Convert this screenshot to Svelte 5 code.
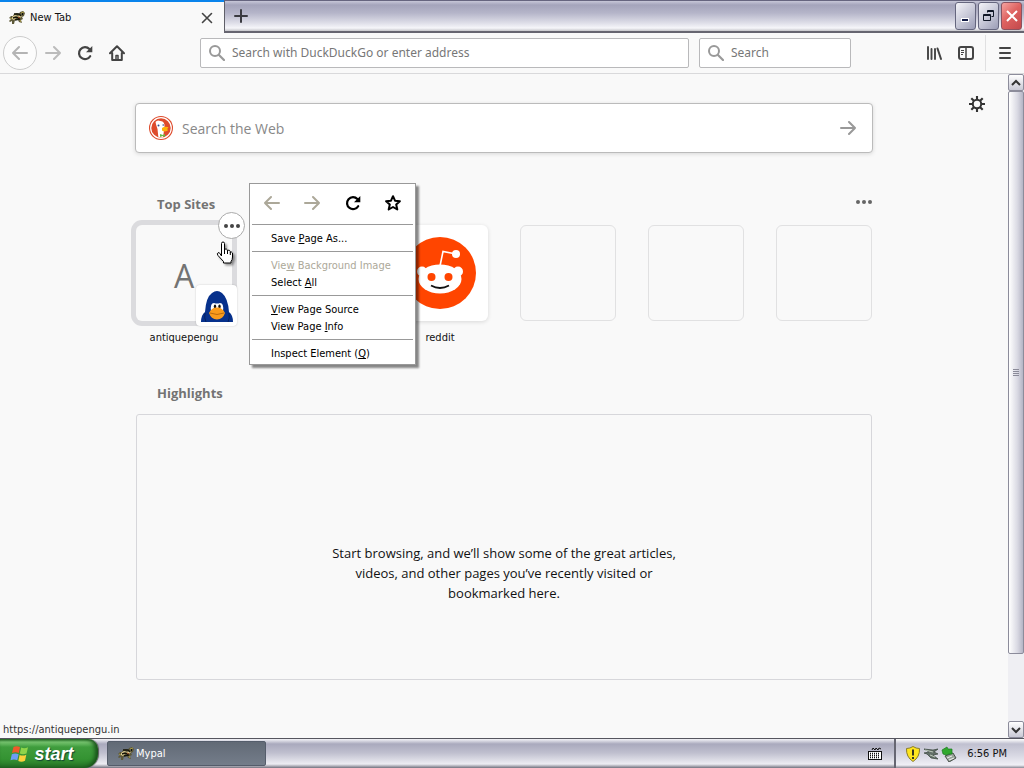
<script>
  const emptySites = [1, 2, 3];
</script>

{#snippet turtle()}
  <svg class="turtle" width="16" height="16" viewBox="0 0 16 16" aria-hidden="true">
    <path d="M0 8L2 6 4 6 5 4 8 3 10 4 11 2 14 1 16 3 15 6 13 7 14 9 12 10 13 13 10 12 9 10 6 10 5 14 3 14 3 11 1 12 0 11 2 9Z" fill="#5d5838" />
    <path d="M3 7l3-2 3 1 2-1 2 1-2 2-4 0-2 2-2-1z" fill="#e2d196" />
    <path d="M5 4h5l2 2M4 8l3-1 4 1M6 10l5-1" stroke="#151509" stroke-width="1.500" fill="none" />
    <path d="M12 3l3-1M1 8l2 1M11 10l1 2" stroke="#a79a48" />
    <path d="M13 4h1" stroke="#111" stroke-width="2" />
    <path d="M9 7l2 1" stroke="#b4572c" />
  </svg>
{/snippet}
{#snippet back()}
  <svg width="16" height="16" viewBox="0 0 16 16" fill="none" stroke="currentColor" stroke-width="2" stroke-linecap="round" stroke-linejoin="round" aria-hidden="true"><path d="M15 8H1M7 2L1 8l6 6" /></svg>
{/snippet}
{#snippet forward()}
  <svg width="16" height="16" viewBox="0 0 16 16" fill="none" stroke="currentColor" stroke-width="2" stroke-linecap="round" stroke-linejoin="round" aria-hidden="true"><path d="M1 8h14M9 2l6 6-6 6" /></svg>
{/snippet}
{#snippet reload()}
  <svg width="16" height="16" viewBox="0 0 16 16" fill="none" stroke="currentColor" stroke-width="2.2" stroke-linecap="round" aria-hidden="true"><path d="M13.2 11.2A6 6 0 1 1 12.4 4" /><path d="M15.3 1v6.3H9z" fill="currentColor" stroke="none" /></svg>
{/snippet}
{#snippet lens()}
  <svg width="16" height="16" viewBox="0 0 16 16" fill="none" stroke="currentColor" stroke-width="2" stroke-linecap="round" aria-hidden="true"><circle cx="6" cy="6" r="5" /><path d="M10 10l5 5" stroke-width="2.2" /></svg>
{/snippet}
{#snippet dots()}
  <svg width="16" height="16" viewBox="0 0 16 16" fill="currentColor" aria-hidden="true"><circle cx="2" cy="8" r="2" /><circle cx="8" cy="8" r="2" /><circle cx="14" cy="8" r="2" /></svg>
{/snippet}

<div class="desktop">
  <header class="titlebar">
    <div class="tab">
      {@render turtle()}
      <span>New Tab</span>
      <button aria-label="Close tab"><svg width="12" height="12" viewBox="0 0 12 12" fill="none" stroke="#444" stroke-width="1.600" stroke-linecap="round"><path d="M1.500 1.500l9 9M10.500 1.500l-9 9" /></svg></button>
    </div>
    <button class="newtab" aria-label="Open a new tab"><svg width="16" height="16" viewBox="0 0 16 16" stroke="#3a3a40" stroke-width="2" stroke-linecap="round"><path d="M8 2v12M2 8h12" /></svg></button>
    <div class="winbuttons">
      <button aria-label="Minimize"><svg width="16" height="16" viewBox="0 0 16 16"><path d="M3 10h8v4H3z" fill="#fff" /><path d="M4 11h6v2H4z" fill="#111a44" /></svg></button>
      <button aria-label="Restore"><svg width="16" height="16" viewBox="0 0 16 16" fill="none" stroke="#111827"><path d="M2.500 6.500h7v6h-7zM2 7.500h8M6.500 4.500v-2h6v6h-2M6 3.500h7" /></svg></button>
      <button class="close" aria-label="Close"><svg width="16" height="16" viewBox="0 0 16 16" fill="none" stroke="#fff" stroke-width="2"><path d="M3 3l10 10M13 3L3 13" /></svg></button>
    </div>
  </header>

  <nav class="toolbar">
    <div class="navbuttons">
      <button class="back" aria-label="Back" disabled>{@render back()}</button>
      <button class="dim" aria-label="Forward" disabled>{@render forward()}</button>
      <button aria-label="Reload">{@render reload()}</button>
      <button aria-label="Home"><svg width="16" height="16" viewBox="0 0 16 16" fill="none" stroke="currentColor" stroke-width="2" stroke-linecap="round" stroke-linejoin="round"><path d="M1 8.300L8 1.300l7 7M3.200 8v7h9.600V8" /><path d="M7 15v-4.500h2V15" stroke-width="1.500" /></svg></button>
    </div>
    <label class="field address">{@render lens()}<input aria-label="Address" placeholder="Search with DuckDuckGo or enter address" /></label>
    <label class="field search">{@render lens()}<input aria-label="Search" placeholder="Search" /></label>
    <div class="tools">
      <button aria-label="Library"><svg width="16" height="16" viewBox="0 0 16 16" fill="none" stroke="currentColor" stroke-width="2" stroke-linecap="round"><path d="M2 2v12M5.500 4v10M9 4v10" stroke-width="1.900" /><path d="M11.500 3.500L15 14" /></svg></button>
      <button aria-label="Sidebars"><svg width="16" height="16" viewBox="0 0 16 16" fill="none" stroke="currentColor" stroke-width="2"><rect x="1" y="2" width="14" height="12" rx="2" /><path d="M8 2v12" stroke-width="1.500" /><path d="M3 5.500h3M3 7.500h3M3 9.500h2" stroke-width="1" /></svg></button>
      <span class="divider"></span>
      <button aria-label="Menu"><svg width="16" height="16" viewBox="0 0 16 16" stroke="currentColor" stroke-width="2" stroke-linecap="round"><path d="M3 3h10M3 8h10M3 13h10" /></svg></button>
    </div>
  </nav>

  <div class="viewport">
    <main>
      <button class="gear" aria-label="Customize"><svg width="16" height="16" viewBox="0 0 16 16" fill="none" stroke="currentColor"><circle cx="8" cy="8" r="4.200" stroke-width="2" /><path d="M8 0v4M8 12v4M0 8h4M12 8h4M2.300 2.300l2.800 2.800M10.900 10.900l2.800 2.800M2.300 13.700l2.800-2.800M10.900 5.100l2.800-2.800" stroke-width="2.100" /></svg></button>
      <div class="content">
        <label class="websearch">
          <svg width="24" height="24" viewBox="0 0 24 24" aria-hidden="true">
            <circle cx="12" cy="12" r="12" fill="#de4b2c" /><circle cx="12" cy="12" r="10.300" fill="none" stroke="#fff" stroke-width="1.200" />
            <path d="M6.500 6Q8 3.500 11.500 5Q16 5.500 15.500 11L14.500 18 14 21.300Q11 22 9.300 20.800L8.500 13Q7 9 6.500 6Z" fill="#fff" />
            <path d="M13 12Q16 10 19.500 11.300L18 13.200Q20 13.500 18 15Q15 16 13 14.500Z" fill="#fdb20a" />
            <circle cx="9.500" cy="9.500" r="1" fill="#2d4f8e" /><circle cx="14.200" cy="9" r=".8" fill="#2d4f8e" />
            <path d="M11 18l3 1 2-1v3l-2-1-3 1z" fill="#65bc46" />
          </svg>
          <input aria-label="Search the Web" placeholder="Search the Web" />
          <button aria-label="Submit search">{@render forward()}</button>
        </label>

        <section class="sites">
          <div class="heading"><h2>Top Sites</h2><button aria-label="Top Sites options">{@render dots()}</button></div>
          <div class="tiles">
            <a class="site" href="https://antiquepengu.in">
              <span class="tile letter">A
                <span class="favicon"><svg width="34" height="34" viewBox="0 0 34 34" aria-hidden="true"><path d="M1 33Q1 26 5 23Q6 8 12 4Q17 0 22 4Q28 9 29 23Q33 26 33 33Z" fill="#07318c" /><path d="M5 24Q4 29 6 33M29 24Q30 29 28 33" stroke="#05205e" fill="none" /><path d="M11 22Q10 14 14 14Q17 15 20 14Q24 14 23 22Z" fill="#fff" /><ellipse cx="15" cy="17.500" rx="1.200" ry="2" fill="#111" /><ellipse cx="19.500" cy="17.500" rx="1.200" ry="2" fill="#111" /><path d="M9 24Q12 18 17 18.500Q22 18 25 24Q23 30 17 30.500Q11 30 9 24Z" fill="#f99b1c" /><path d="M10 24Q17 27 24 24" stroke="#bd6b0c" fill="none" /></svg></span>
              </span>
              <span class="name">antiquepengu</span>
            </a>
            <span class="site"><span class="tile blank"></span></span>
            <a class="site" href="#reddit">
              <span class="tile white"><svg width="72" height="72" viewBox="0 0 72 72" aria-hidden="true"><circle cx="36" cy="36" r="36" fill="#ff4500" /><path d="M36 29l3-14.500 13 2.500" fill="none" stroke="#fff" stroke-width="1.600" /><circle cx="52" cy="17" r="4" fill="#fff" /><circle cx="18" cy="34.500" r="5" fill="#fff" /><circle cx="54" cy="34.500" r="5" fill="#fff" /><ellipse cx="36" cy="42" rx="21.500" ry="14.500" fill="#fff" /><circle cx="27.500" cy="40" r="4" fill="#ff4500" /><circle cx="44.500" cy="40" r="4" fill="#ff4500" /><path d="M27 48.500q9 5 18 0" fill="none" stroke="#111" stroke-width="1.800" /></svg></span>
              <span class="name">reddit</span>
            </a>
            {#each emptySites as n (n)}<span class="site"><span class="tile blank"></span></span>{/each}
          </div>
          <button class="sitemenu" aria-label="Site options">{@render dots()}</button>
          <svg class="cursor" width="18" height="24" viewBox="0 0 18 24" aria-hidden="true"><path d="M5.500 15V2.500Q5.500 1 7 1T8.500 2.500V9Q9 7.500 10.300 8T11.500 10Q12 8.700 13.300 9.300T14.300 11.500Q15.500 10.300 16.500 12V16Q16.500 19 15 20.500V22H7.500V20.500L2 14.500Q.5 12.500 2 11.800T4 12.800Z" fill="#fff" stroke="#000" /><path d="M8.500 9v4M11.500 10v3M14.300 11v3" stroke="#000" /></svg>

          <div class="menu" role="menu">
            <div class="iconrow">
              <button role="menuitem" aria-label="Back" disabled>{@render back()}</button>
              <button role="menuitem" aria-label="Forward" disabled>{@render forward()}</button>
              <button role="menuitem" aria-label="Reload">{@render reload()}</button>
              <button role="menuitem" aria-label="Bookmark"><svg width="16" height="16" viewBox="0 0 16 16" fill="none" stroke="currentColor" stroke-width="2" stroke-linejoin="round"><path d="M8 1.200l2 4.500 4.900.5-3.700 3.300 1.100 5L8 12l-4.300 2.500 1.100-5L1.100 6.200l4.900-.5z" /></svg></button>
            </div>
            <div class="group"><button role="menuitem">Save <u>P</u>age As...</button></div>
            <div class="group"><button role="menuitem" disabled>Vie<u>w</u> Background Image</button><button role="menuitem">Select <u>A</u>ll</button></div>
            <div class="group"><button role="menuitem"><u>V</u>iew Page Source</button><button role="menuitem">View Page <u>I</u>nfo</button></div>
            <div class="group"><button role="menuitem">Inspect Element (<u>Q</u>)</button></div>
          </div>
        </section>

        <section class="highlights">
          <h2>Highlights</h2>
          <div class="emptybox"><p>Start browsing, and we’ll show some of the great articles, videos, and other pages you’ve recently visited or bookmarked here.</p></div>
        </section>
      </div>
      <div class="status">https://antiquepengu.in</div>
    </main>
    <div class="scrollbar">
      <button aria-label="Scroll up"><svg width="10" height="8" viewBox="0 0 10 8" fill="none" stroke="#333" stroke-width="2"><path d="M1 6l4-4 4 4" /></svg></button>
      <div class="track"><div class="thumb"><svg width="6" height="8" viewBox="0 0 6 8" stroke="#8b8b99"><path d="M0 .5h6M0 2.500h6M0 4.500h6M0 6.500h6" /></svg></div></div>
      <button aria-label="Scroll down"><svg width="10" height="8" viewBox="0 0 10 8" fill="none" stroke="#333" stroke-width="2"><path d="M1 2l4 4 4-4" /></svg></button>
    </div>
  </div>

  <footer class="taskbar">
    <button class="start"><svg width="20" height="18" viewBox="0 0 20 18" aria-hidden="true"><path d="M3.500 2Q6.500.3 10 2L8.800 8Q5.500 6.500 2 8Z" fill="#f0592b" /><path d="M11.200 2.600Q14.500 4 18 2.300L16.500 8.500Q13 10 9.800 8.600Z" fill="#8fd44a" /><path d="M1.800 9.200Q5.200 7.700 8.600 9.200L7.300 15.300Q4 13.700.5 15.300Z" fill="#6d9df5" /><path d="M9.600 9.900Q13 11.300 16.300 9.700L15 15.800Q11.500 17.500 8.300 16Z" fill="#fcd03b" /></svg><span>start</span></button>
    <button class="task">{@render turtle()}<span>Mypal</span></button>
    <svg class="keyboard" width="14" height="14" viewBox="0 0 14 14" fill="none" stroke="#111" aria-hidden="true"><rect x=".5" y="5.500" width="13" height="8" fill="#fff" /><path d="M2 7.500h10M2 9.500h10M2 11.500h10" stroke-dasharray="1 1" stroke-width="1.500" /><path d="M4 4l1-2 2 2 1-2 2 2 1-2 2 1" /></svg>
    <div class="tray">
      <svg width="16" height="16" viewBox="0 0 16 16" aria-hidden="true"><path d="M8 .5Q11 2.500 14.500 2.500Q15 11 8 15.500Q1 11 1.500 2.500Q5 2.500 8 .5Z" fill="#ffe51e" stroke="#8a7d2b" /><path d="M8 3.500v6M8 11v2" stroke="#222" stroke-width="1.800" /></svg>
      <svg width="16" height="16" viewBox="0 0 16 16" aria-hidden="true"><path d="M1 3l9 1 5-1-4 3 4 2-5 1 5 4-7-1-4-4-3-1 5-1z" fill="#637069" stroke="#35423a" stroke-width=".7" /><path d="M2 4l8 2M7 9l5 2" stroke="#bdcabb" /></svg>
      <svg width="16" height="16" viewBox="0 0 16 16" aria-hidden="true"><path d="M4 10l8-3 3 5-7 4z" fill="#9aa49a" stroke="#485048" /><path d="M6 12l5-2M8 14l5-2" stroke="#eee" /><path d="M1 4l5-3 1 2h4v5H8L5 9 2 8z" fill="#30a82d" stroke="#187b20" stroke-width=".7" /></svg>
      <time>6:56 PM</time>
    </div>
  </footer>
</div>

<style>
  :global(body) { margin: 0; }
  * { box-sizing: border-box; }
  .desktop { display: flex; flex-direction: column; min-height: 100vh; background: #f9f9f9; color: #111; font: 11px/17px "DejaVu Sans Condensed", "DejaVu Sans", sans-serif; font-stretch: condensed; }
  button { font: inherit; color: inherit; background: none; border: 0; padding: 0; display: flex; align-items: center; justify-content: center; }
  input { font: inherit; color: #222; border: 0; background: none; padding: 0; flex: 1; min-width: 0; outline: 0; }
  input::placeholder { color: #777; opacity: 1; }
  a { color: inherit; text-decoration: none; }
  svg { flex: none; display: block; }

  .titlebar { display: flex; height: 33px; border-top: 1px solid #66657f; border-bottom: 2px solid #666570; background: linear-gradient(#c7c7d8 0, #a4a4bb 4px, #b5b5c9 12px, #dedee8 22px, #f6f6fa 27px, #c5c5ca 30px); }
  .tab { display: flex; align-items: center; gap: 5px; width: 224px; height: 33px; margin-top: -1px; padding: 0 11px 0 9px; border-top: 2px solid #0a84ec; background: #f9f9f9; }
  .tab span { flex: 1; }
  .newtab { width: 33px; border-left: 1px solid #5f5f68; }
  .winbuttons { display: flex; gap: 2px; margin-left: auto; padding: 1px 2px 0 0; }
  .winbuttons button { width: 21px; height: 28px; border: 1px solid #65667e; border-radius: 3px; background: linear-gradient(135deg, #f3f3f8, #c9cad9 50%, #9b9db6); }
  .winbuttons .close { background: linear-gradient(135deg, #f5a3a0, #df6361 45%, #c3494c); border-color: #8b5360; }

  .toolbar { display: flex; align-items: center; height: 41px; border-bottom: 1px solid #d9d9db; color: #444; padding-right: 3px; }
  .navbuttons { display: flex; align-items: center; width: 200px; padding-left: 3px; }
  .navbuttons button { width: 32px; height: 32px; }
  .navbuttons .back { width: 34px; height: 34px; border: 1px solid #ccc; border-radius: 50%; background: #fcfcfc; color: #b4b4b4; }
  .navbuttons .dim { color: #bbb; }
  .field { display: flex; align-items: center; gap: 7px; height: 30px; padding: 0 8px; border: 1px solid #b9b9bb; border-radius: 2px; background: #fff; color: #999; font: 12px/18px "Noto Sans", sans-serif; }
  .address { flex: 1; }
  .search { width: 152px; margin-left: 10px; }
  .tools { display: flex; align-items: center; margin-left: 67px; }
  .tools button { width: 32px; height: 32px; }
  .divider { width: 1px; height: 36px; margin: 0 3px; background: #e0e0e1; }

  .viewport { display: flex; flex: 1; }
  main { position: relative; flex: 1; padding: 29px 24px 58px; }
  .gear { position: absolute; top: 22px; right: 23px; color: #333; }
  .content { max-width: 736px; margin: 0 auto; font-family: "Open Sans", sans-serif; font-stretch: normal; }
  .websearch { display: flex; align-items: center; gap: 9px; height: 50px; margin: 0 -1px; padding: 0 16px 0 13px; border: 1px solid #bbb; border-radius: 4px; background: #fff; box-shadow: 0 1px 4px #0002; font-size: 14px; color: #999; }
  .websearch input::placeholder { color: #888; }
  h2 { margin: 0; font-size: 13px; line-height: 20px; font-weight: 700; color: #737373; }
  .sites { position: relative; margin-top: 41px; }
  .heading { display: flex; align-items: flex-start; justify-content: space-between; padding-left: 21px; }
  .heading button { color: #666; }
  .tiles { display: grid; grid-template-columns: repeat(6, 96px); justify-content: space-between; margin-top: 11px; }
  .site { display: flex; flex-direction: column; align-items: center; }
  .tile { position: relative; display: flex; align-items: center; justify-content: center; width: 96px; height: 96px; border-radius: 6px; }
  .letter { padding-top: 4px; color: #737373; font-size: 32px; box-shadow: 0 0 0 5px #dbdbde; background: #f9f9f9; }
  .white { background: #fff; box-shadow: 0 1px 4px #0002; }
  .blank { border: 1px solid #e1e1e2; }
  .favicon { position: absolute; right: -5px; bottom: -5px; width: 41px; height: 41px; display: flex; align-items: flex-end; justify-content: center; padding-bottom: 3px; border-radius: 4px; background: #fff; box-shadow: 0 0 2px #0003; }
  .name { margin-top: 8px; font: 11px/17px "DejaVu Sans Condensed", sans-serif; font-stretch: condensed; }
  .sitemenu { position: absolute; left: 82px; top: 18px; width: 27px; height: 27px; border: 1px solid #aaa; border-radius: 50%; background: #fff; color: #444; }
  .cursor { position: absolute; left: 80px; top: 47px; filter: drop-shadow(2px 2px 1px #0006); }

  .menu { position: absolute; left: 113px; top: -11px; width: 167px; padding: 1px 2px 0; border: 1px solid #999; background: #fff; box-shadow: 3px 3px 2px #0007; font: 11px/17px "DejaVu Sans Condensed", sans-serif; font-stretch: condensed; color: #000; }
  .iconrow { display: flex; height: 39px; padding-bottom: 4px; }
  .iconrow button { flex: 1; }
  .menu button:disabled { color: #aca899; }
  .group { border-top: 1px solid #999; padding: 5px 0 4px; }
  .group:last-child { padding-bottom: 2px; }
  .group button { width: 100%; justify-content: flex-start; padding-left: 19px; white-space: pre; }

  .highlights { margin-top: 37px; }
  .highlights h2 { padding-left: 21px; }
  .emptybox { display: flex; align-items: center; justify-content: center; height: 266px; margin-top: 11px; padding-top: 52px; border: 1px solid #d7d7db; border-radius: 3px; }
  .emptybox p { width: 350px; margin: 0; text-align: center; font-size: 13px; line-height: 20px; }
  .status { position: absolute; left: 0; bottom: 0; padding: 0 3px; color: #333; }

  .scrollbar { display: flex; flex-direction: column; width: 16px; background: #efeff3; }
  .scrollbar button { height: 17px; border: 1px solid #8c8c9b; border-radius: 2px; background: linear-gradient(#fff, #c9c9d5); }
  .track { flex: 1; display: flex; }
  .thumb { width: 16px; height: 89.4%; display: flex; align-items: center; justify-content: center; border: 1px solid #8c8c9b; border-radius: 2px; background: linear-gradient(90deg, #fff, #d9d9e3 60%, #b5b5c5); }

  .taskbar { display: flex; align-items: stretch; height: 30px; border-top: 1px solid #55555f; background: linear-gradient(#f4f4f8 0, #a9a9bd 5px, #c0c0cf 14px, #ededf3 25px, #73737f 29px); }
  .start { gap: 4px; width: 98px; padding-right: 14px; border-radius: 0 10px 14px 0; background: linear-gradient(#2f7c2d 0, #79c772 3px, #3f9c3d 8px, #349332 20px, #246f25); box-shadow: inset -3px 0 4px #174f18, 1px 0 1px #555; color: #fff; font: italic 700 18px/20px "Liberation Sans", sans-serif; text-shadow: 1px 1px 1px #143; }
  .task { width: 159px; margin: 2px 0 2px 9px; padding-left: 10px; gap: 2px; justify-content: flex-start; border: 1px solid #555d6b; border-radius: 2px; background: linear-gradient(#626a76, #747d8a); color: #fff; }
  .keyboard { margin: 7px 12px 0 auto; }
  .tray { display: flex; align-items: center; gap: 2px; padding: 0 17px 0 9px; border-left: 2px solid #666672; background: linear-gradient(#fff 0, #c0c0d0 5px, #d7d7e2 16px, #f0f0f6 26px, #888894 29px); }
  .tray time { margin-left: 8px; }
</style>
